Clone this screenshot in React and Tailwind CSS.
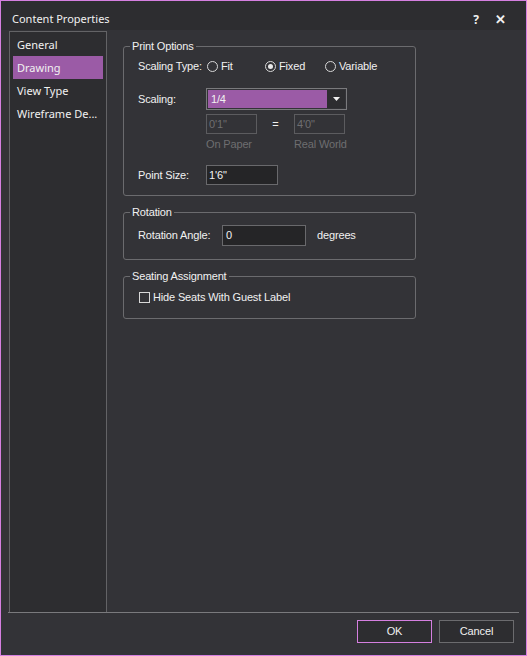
import React, { useState } from "react";

const FONT = { fontFamily: '"Liberation Sans", Arial, sans-serif' };
const UI_FONT = { fontFamily: '"Noto Sans", "Open Sans", sans-serif' };

const Radio = ({ label, checked, onClick, width }) => (
    <button
        type="button"
        onClick={onClick}
        className="flex items-center h-[18px] text-[11px] tracking-[-0.15px] text-[#f1f1f1]"
        style={{ width }}
    >
        <span className="w-[11px] h-[11px] rounded-full border border-[#d8d8d8] flex items-center justify-center mr-[3px]">
            {checked && <span className="w-[5px] h-[5px] rounded-full bg-[#e8e8e8]" />}
        </span>
        {label}
    </button>
);

const Group = ({ title, className = "", children }) => (
    <fieldset className={`w-[293px] border border-[#6b6b6e] rounded-[3px] pl-[14px] ${className}`}>
        <legend className="-ml-[8px] px-[2px] h-[14px] leading-[14px] text-[11px] tracking-[-0.15px] text-[#f1f1f1]">
            {title}
        </legend>
        {children}
    </fieldset>
);

const App = () => {
    const [active, setActive] = useState("Drawing");
    const [scaleType, setScaleType] = useState("Fixed");
    const [hideSeats, setHideSeats] = useState(false);

    const navItems = ["General", "Drawing", "View Type", "Wireframe De..."];

    return (
        <div
            className="w-[527px] h-[656px] border border-[#d57fe0] bg-[#333337] flex flex-col text-[#f1f1f1] text-[11px] tracking-[-0.15px]"
            style={FONT}
        >
            {/* Title bar */}
            <div className="h-[29px] bg-[#2d2d30] flex items-center pt-[8px] pl-[11px] pr-[20px] tracking-normal" style={UI_FONT}>
                <span className="text-[11px] text-[#f1f1f1] flex-1">Content Properties</span>
                <span className="text-[12px] font-bold mr-[16px]">?</span>
                <span className="text-[13px] font-bold leading-none">✕</span>
            </div>

            <div className="flex-1 flex">
                {/* Left nav */}
                <div className="ml-[8px] mt-[1px] w-[98px] border border-b-0 border-[#636366] bg-[#2d2d30] pt-[1px] px-[3px] tracking-normal" style={UI_FONT}>
                    {navItems.map((item) => (
                        <div
                            key={item}
                            onClick={() => setActive(item)}
                            className={`h-[23px] flex items-center pt-[1px] pl-[4px] text-[11px] whitespace-nowrap ${
                                active === item ? "bg-[#9b5ba6]" : ""
                            }`}
                        >
                            {item}
                        </div>
                    ))}
                </div>

                {/* Content */}
                <div className="pl-[16px] pt-[9px] flex flex-col">
                    <Group title="Print Options" className="pb-[10px]">
                        <div className="flex items-center mt-[4px]">
                            <span className="w-[69px]">Scaling Type:</span>
                            <Radio label="Fit" width={58} checked={scaleType === "Fit"} onClick={() => setScaleType("Fit")} />
                            <Radio label="Fixed" width={60} checked={scaleType === "Fixed"} onClick={() => setScaleType("Fixed")} />
                            <Radio label="Variable" width={60} checked={scaleType === "Variable"} onClick={() => setScaleType("Variable")} />
                        </div>

                        <div className="flex items-center mt-[13px]">
                            <span className="w-[68px]">Scaling:</span>
                            <div className="w-[141px] h-[22px] border border-[#7a7a7d] flex p-[1px]">
                                <div className="flex-1 bg-[#9b5ba6] flex items-center pl-[3px]">1/4</div>
                                <div className="w-[18px] bg-[#2d2d30] flex items-center justify-center">
                                    <svg width="7" height="4" viewBox="0 0 7 4">
                                        <path d="M0 0h7L3.5 4z" fill="#f1f1f1" />
                                    </svg>
                                </div>
                            </div>
                        </div>

                        <div className="flex items-center mt-[4px] ml-[68px] text-[#6e6e70]">
                            <div className="w-[51px] h-[20px] border border-[#5c5c5f] flex items-center pl-[2px]">0'1"</div>
                            <span className="w-[37px] text-center text-[#f1f1f1]">=</span>
                            <div className="w-[51px] h-[20px] border border-[#5c5c5f] flex items-center pl-[2px]">4'0"</div>
                        </div>

                        <div className="flex mt-[3px] ml-[68px] h-[14px] leading-[14px] text-[#6e6e70]">
                            <span className="w-[88px]">On Paper</span>
                            <span>Real World</span>
                        </div>

                        <div className="flex items-center mt-[14px]">
                            <span className="w-[68px]">Point Size:</span>
                            <div className="w-[72px] h-[20px] border border-[#69696c] bg-[#252527] flex items-center pl-[2px]">
                                1'6"
                            </div>
                        </div>
                    </Group>

                    <Group title="Rotation" className="mt-[9px] pb-[13px]">
                        <div className="flex items-center mt-[6px]">
                            <span className="w-[84px]">Rotation Angle:</span>
                            <div className="w-[84px] h-[21px] border border-[#69696c] bg-[#252527] flex items-center pl-[3px]">
                                0
                            </div>
                            <span className="ml-[11px]">degrees</span>
                        </div>
                    </Group>

                    <Group title="Seating Assignment" className="mt-[9px] pb-[14px]">
                        <div
                            className="flex items-center mt-[7px] h-[14px] cursor-pointer"
                            onClick={() => setHideSeats(!hideSeats)}
                        >
                            <span className="w-[11px] h-[11px] border border-[#d8d8d8] ml-[1px] mr-[3px] flex items-center justify-center text-[9px] leading-none">
                                {hideSeats ? "✓" : ""}
                            </span>
                            <span>Hide Seats With Guest Label</span>
                        </div>
                    </Group>
                </div>
            </div>

            {/* Footer */}
            <div className="ml-[7px] mr-[7px] border-t border-[#7a7a7d]" />
            <div className="h-[42px] flex justify-end items-start pt-[7px] pr-[12px] gap-[7px]">
                <button type="button" className="w-[75px] h-[23px] border border-[#d57fe0] bg-[#2d2d30]">
                    OK
                </button>
                <button type="button" className="w-[75px] h-[23px] border border-[#6b6b6e] bg-[#2d2d30]">
                    Cancel
                </button>
            </div>
        </div>
    );
};

export default App;
